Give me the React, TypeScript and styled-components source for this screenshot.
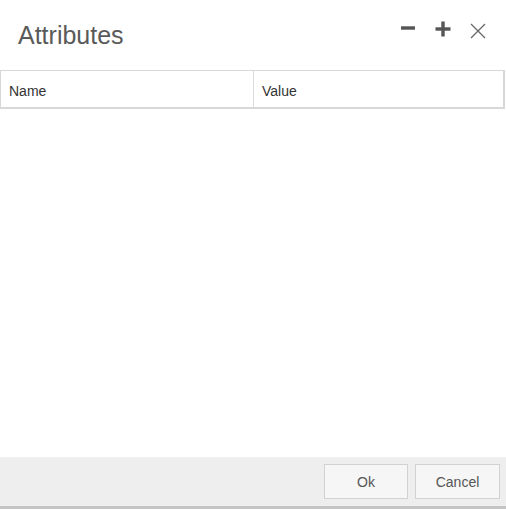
import React from "react";
import styled, { createGlobalStyle } from "styled-components";

const Global = createGlobalStyle`
  html, body { margin: 0; padding: 0; background: #fff; }
  body { font-family: "Liberation Sans", Arial, sans-serif; }
`;

const Dialog = styled.div`
  width: 506px;
  height: 509px;
  display: flex;
  flex-direction: column;
  background: #fff;
  box-sizing: border-box;
`;

const Header = styled.div`
  height: 70px;
  display: flex;
  align-items: flex-start;
  justify-content: space-between;
  box-sizing: border-box;
  padding: 0 18px 0 18px;
`;

const Title = styled.h1`
  margin: 21px 0 0 0;
  font-size: 25px;
  font-weight: normal;
  color: #5a5a5a;
  line-height: 29px;
`;

const Tools = styled.div`
  display: flex;
  gap: 19px;
  margin-top: 20px;
  margin-right: 2px;
`;

const ToolButton = styled.button<{ $dy?: number }>`
  width: 16px;
  height: 17px;
  padding: 0;
  border: 0;
  background: none;
  display: flex;
  align-items: center;
  justify-content: center;
  cursor: pointer;
  margin-top: ${(p) => p.$dy ?? 0}px;
`;

const Body = styled.div`
  flex: 1;
  display: flex;
  flex-direction: column;
`;

const Table = styled.div`
  display: grid;
  grid-template-columns: 252px 1fr;
  width: 505px;
  box-sizing: border-box;
  border: 1px solid #d8d8d8;
  border-right-width: 2px;
  border-bottom-width: 2px;
`;

const HeadCell = styled.div<{ $first?: boolean }>`
  height: 36px;
  box-sizing: border-box;
  display: flex;
  align-items: center;
  padding: 3px 0 0 8px;
  font-size: 14px;
  color: #333;
  border-left: ${(p) => (p.$first ? "none" : "1px solid #dcdcdc")};
`;

const Footer = styled.div`
  height: 52px;
  background: #eeeeee;
  border-bottom: 3px solid #c4c4c4;
  box-sizing: border-box;
  display: flex;
  justify-content: flex-end;
  align-items: flex-start;
  gap: 7px;
  padding: 7px 6px 0 0;
`;

const Button = styled.button<{ $w: number }>`
  width: ${(p) => p.$w}px;
  height: 35px;
  background: #f6f6f6;
  border: 1px solid #d2d2d2;
  font-family: "Liberation Sans", Arial, sans-serif;
  font-size: 14px;
  color: #555;
  padding: 0;
  cursor: pointer;
`;

export default function App() {
  return (
    <>
      <Global />
      <Dialog>
        <Header>
          <Title>Attributes</Title>
          <Tools>
            <ToolButton aria-label="minus" $dy={-1}>
              <svg width="16" height="16" viewBox="0 0 16 16">
                <rect x="1" y="6.3" width="14" height="3.4" fill="#555" />
              </svg>
            </ToolButton>
            <ToolButton aria-label="plus">
              <svg width="16" height="16" viewBox="0 0 16 16">
                <rect x="0.5" y="6.3" width="15" height="3.4" fill="#555" />
                <rect x="6.3" y="0.5" width="3.4" height="15" fill="#555" />
              </svg>
            </ToolButton>
            <ToolButton aria-label="close" $dy={2}>
              <svg width="16" height="16" viewBox="0 0 16 16">
                <path d="M1 1 L15 15 M15 1 L1 15" stroke="#666" strokeWidth="1.3" fill="none" />
              </svg>
            </ToolButton>
          </Tools>
        </Header>
        <Body>
          <Table>
            <HeadCell $first>Name</HeadCell>
            <HeadCell>Value</HeadCell>
          </Table>
        </Body>
        <Footer>
          <Button $w={84}>Ok</Button>
          <Button $w={85}>Cancel</Button>
        </Footer>
      </Dialog>
    </>
  );
}
